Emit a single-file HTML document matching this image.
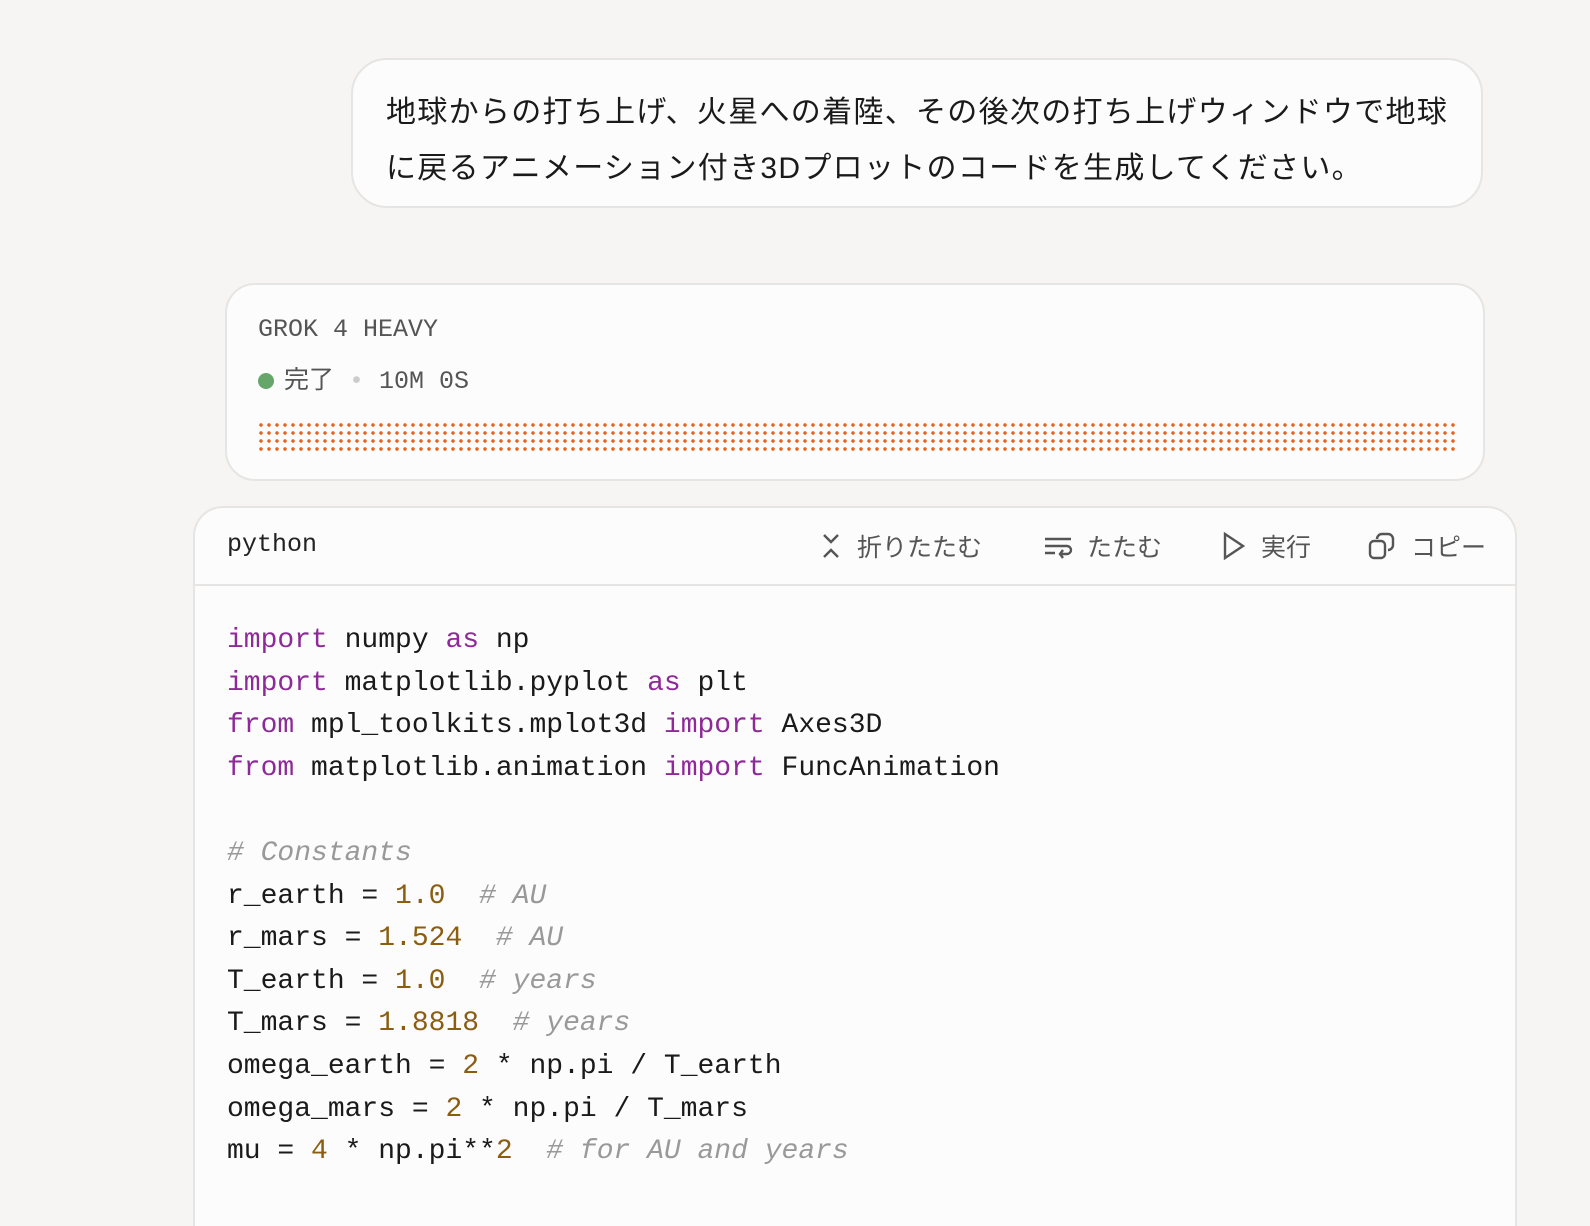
<!DOCTYPE html>
<html style="overflow:hidden;height:1226px"><head><meta charset="utf-8"><style>
body{margin:0;background:#f6f5f3;width:1590px;height:1226px;overflow:hidden;font-family:"Liberation Sans","Noto Sans CJK JP",sans-serif;color:#1a1a1a;position:relative}
.user{position:absolute;left:351px;top:58px;width:1132px;height:150px;box-sizing:border-box;border:2px solid #e6e5e3;border-radius:36px;background:#fcfcfc;padding:25px 0 0 33px;font-size:30px;line-height:56px;letter-spacing:1.3px}
.card{position:absolute;left:225px;top:283px;width:1260px;height:198px;box-sizing:border-box;border:2px solid #e6e5e3;border-radius:30px;background:#fcfcfc}
.mono{font-family:"Liberation Mono","Noto Sans CJK JP",monospace}
.t1{position:absolute;left:31px;top:30px;font-size:25px;color:#555}
.t2{position:absolute;left:31px;top:75px;font-size:25px;color:#555}
.dotg{display:inline-block;width:16px;height:16px;border-radius:50%;background:#67a66a;vertical-align:-1px;margin-right:10px}
.dots{position:absolute;left:30px;top:136px;width:1198px;height:32px;background:radial-gradient(circle,#e8631e 1.6px,transparent 2px) 0 0/8px 8px}
.code{position:absolute;left:193px;top:506px;width:1324px;height:720px;box-sizing:border-box;border:2px solid #e6e5e3;border-bottom:none;border-radius:30px 30px 0 0;background:#fcfcfc;overflow:hidden}
.hdr{height:76px;border-bottom:2px solid #e6e5e3;position:relative}
.lang{position:absolute;left:32px;top:22px;font-size:25px;color:#222}
.act{position:absolute;top:20px;font-size:25px;color:#555;display:flex;align-items:center;gap:14px}
pre{margin:0;position:absolute;left:32px;top:112px;font-family:"Liberation Mono",monospace;font-size:28px;line-height:42.6px;color:#1a1a1a}
.k{color:#8e2a98}.n{color:#8a5d10}.c{color:#999;font-style:italic}
</style></head><body>
<div class="user">地球からの打ち上げ、火星への着陸、その後次の打ち上げウィンドウで地球<br>に戻るアニメーション付き3Dプロットのコードを生成してください。</div>
<div class="card">
<div class="t1 mono">GROK 4 HEAVY</div>
<div class="t2 mono"><span class="dotg"></span><span style="font-family:'Noto Sans CJK JP',sans-serif">完了</span> <span style="color:#ccc">•</span> 10M 0S</div>
<div class="dots"></div>
</div>
<div class="code">
<div class="hdr">
<div class="lang mono">python</div>
<div class="act" style="left:624px"><svg width="24" height="28" viewBox="0 0 24 28" fill="none" stroke="#555" stroke-width="2.4"><path d="M5 3l7 7 7-7M5 25l7-7 7 7"/></svg>折りたたむ</div>
<div class="act" style="left:848px"><svg width="30" height="26" viewBox="0 0 30 26" fill="none" stroke="#555" stroke-width="2.4"><path d="M2 6h26M2 13h22a4 4 0 0 1 0 8h-6M2 20h10M20 17l-3 4 3 4"/></svg>たたむ</div>
<div class="act" style="left:1026px"><svg width="26" height="30" viewBox="0 0 26 30" fill="none" stroke="#555" stroke-width="2.4"><path d="M4 3l18 12-18 12z"/></svg>実行</div>
<div class="act" style="left:1172px"><svg width="30" height="30" viewBox="0 0 30 30" fill="none" stroke="#555" stroke-width="2.4"><rect x="3" y="10" width="15" height="17" rx="4"/><path d="M10 8a5 5 0 0 1 5-5h6a5 5 0 0 1 5 5v6a5 5 0 0 1-5 5"/></svg>コピー</div>
</div>
<pre><span class="k">import</span> numpy <span class="k">as</span> np
<span class="k">import</span> matplotlib.pyplot <span class="k">as</span> plt
<span class="k">from</span> mpl_toolkits.mplot3d <span class="k">import</span> Axes3D
<span class="k">from</span> matplotlib.animation <span class="k">import</span> FuncAnimation

<span class="c"># Constants</span>
r_earth = <span class="n">1.0</span>  <span class="c"># AU</span>
r_mars = <span class="n">1.524</span>  <span class="c"># AU</span>
T_earth = <span class="n">1.0</span>  <span class="c"># years</span>
T_mars = <span class="n">1.8818</span>  <span class="c"># years</span>
omega_earth = <span class="n">2</span> * np.pi / T_earth
omega_mars = <span class="n">2</span> * np.pi / T_mars
mu = <span class="n">4</span> * np.pi**<span class="n">2</span>  <span class="c"># for AU and years</span></pre>
</div>
</body></html>
